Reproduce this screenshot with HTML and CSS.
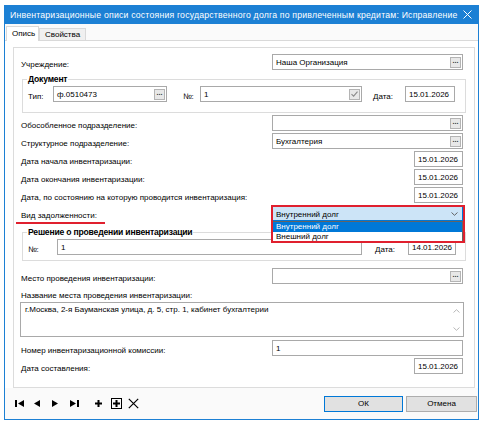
FILE: index.html
```html
<!DOCTYPE html>
<html lang="ru">
<head>
    <meta charset="UTF-8">
    <title>Инвентаризационные описи</title>
    <link rel="stylesheet" href="styles.css">
</head>
<body>
    <div class="window">
        <div class="titlebar">
            <span class="title">Инвентаризационные описи состояния государственного долга по привлеченным кредитам: Исправление</span>
            <svg class="close" width="9" height="9" viewBox="0 0 9 9"><path d="M0.5 0.5L8.5 8.5M8.5 0.5L0.5 8.5" stroke="#fff" stroke-width="1"/></svg>
        </div>

        <div class="tabs">
            <div class="tab active">Опись</div>
            <div class="tab">Свойства</div>
        </div>

        <div class="page">
            <div class="panel">
                <div class="row first">
                    <span class="lbl">Учреждение:</span>
                    <div class="field wide">Наша Организация<span class="dots">...</span></div>
                </div>

                <fieldset class="group doc">
                    <legend>Документ</legend>
                    <div class="grow">
                        <span class="glbl tip">Тип:</span>
                        <div class="field tipf">ф.0510473<span class="dots">...</span></div>
                        <span class="glbl num">№:</span>
                        <div class="field numf">1<span class="chk"><svg width="7" height="6" viewBox="0 0 7 6"><path d="M0.5 3.2L2.6 5.2L6.5 0.6" fill="none" stroke="#8a8a8a" stroke-width="1.1"/></svg></span></div>
                        <span class="glbl dt">Дата:</span>
                        <div class="field docdate">15.01.2026</div>
                    </div>
                </fieldset>

                <div class="row">
                    <span class="lbl">Обособленное подразделение:</span>
                    <div class="field wide"><span class="dots">...</span></div>
                </div>
                <div class="row">
                    <span class="lbl">Структурное подразделение:</span>
                    <div class="field wide">Бухгалтерия<span class="dots">...</span></div>
                </div>
                <div class="row">
                    <span class="lbl">Дата начала инвентаризации:</span>
                    <div class="field date">15.01.2026</div>
                </div>
                <div class="row">
                    <span class="lbl">Дата окончания инвентаризации:</span>
                    <div class="field date">15.01.2026</div>
                </div>
                <div class="row">
                    <span class="lbl">Дата, по состоянию на которую проводится инвентаризация:</span>
                    <div class="field date">15.01.2026</div>
                </div>
                <div class="row">
                    <span class="lbl"><span class="marked">Вид задолженности:</span></span>
                    <div class="combo">
                        <div class="combo-value">Внутренний долг
                            <svg class="chev" width="7" height="4" viewBox="0 0 7 4"><path d="M0.5 0.5L3.5 3.3L6.5 0.5" fill="none" stroke="#555" stroke-width="0.9"/></svg>
                        </div>
                        <div class="dropdown">
                            <div class="opt sel">Внутренний долг</div>
                            <div class="opt">Внешний долг</div>
                        </div>
                        <div class="mark"></div>
                    </div>
                </div>

                <fieldset class="group dec">
                    <legend>Решение о проведении инвентаризации</legend>
                    <div class="grow">
                        <span class="glbl num2">№:</span>
                        <div class="field decnum">1</div>
                        <span class="glbl dt2">Дата:</span>
                        <div class="field decdate">14.01.2026</div>
                    </div>
                </fieldset>

                <div class="row place">
                    <span class="lbl">Место проведения инвентаризации:</span>
                    <div class="field wide"><span class="dots">...</span></div>
                </div>

                <div class="caption">Название места проведения инвентаризации:</div>
                <div class="memo">
                    <span class="memo-text">г.Москва, 2-я Бауманская улица, д. 5, стр. 1, кабинет бухгалтерии</span>
                    <div class="memo-scroll">
                        <svg width="7" height="4" viewBox="0 0 7 4"><path d="M0.5 3.5L3.5 0.7L6.5 3.5" fill="none" stroke="#b0b0b0" stroke-width="0.9"/></svg>
                        <svg width="7" height="4" viewBox="0 0 7 4"><path d="M0.5 0.5L3.5 3.3L6.5 0.5" fill="none" stroke="#b0b0b0" stroke-width="0.9"/></svg>
                    </div>
                </div>

                <div class="row komis">
                    <span class="lbl">Номер инвентаризационной комиссии:</span>
                    <div class="field wide">1</div>
                </div>
                <div class="row">
                    <span class="lbl">Дата составления:</span>
                    <div class="field date">15.01.2026</div>
                </div>
            </div>
        </div>

        <div class="footer">
            <div class="nav">
                <svg class="ic i1" width="9" height="7" viewBox="0 0 9 7"><rect x="0" y="0" width="2" height="7"/><polygon points="9,0 9,7 3,3.5"/></svg>
                <svg class="ic i2" width="7" height="7" viewBox="0 0 7 7"><polygon points="7,0 7,7 1,3.5"/></svg>
                <svg class="ic i3" width="7" height="7" viewBox="0 0 7 7"><polygon points="0,0 0,7 6,3.5"/></svg>
                <svg class="ic i4" width="9" height="7" viewBox="0 0 9 7"><polygon points="0,0 0,7 6,3.5"/><rect x="7" y="0" width="2" height="7"/></svg>
                <svg class="ic i5" width="7" height="7" viewBox="0 0 7 7"><rect x="2.5" y="0" width="2" height="7"/><rect x="0" y="2.5" width="7" height="2"/></svg>
                <svg class="ic i6" width="11" height="11" viewBox="0 0 11 11"><rect x="0.5" y="0.5" width="10" height="10" fill="none" stroke="#000"/><rect x="4.5" y="2" width="2" height="7"/><rect x="2" y="4.5" width="7" height="2"/></svg>
                <svg class="ic i7" width="11" height="11" viewBox="0 0 11 11"><path d="M0.8 0.8L10.2 10.2M10.2 0.8L0.8 10.2" stroke="#000" stroke-width="1.2"/></svg>
            </div>
            <button class="btn ok">ОК</button>
            <button class="btn">Отмена</button>
        </div>
    </div>
</body>
</html>
```

FILE: styles.css
```css
html, body {
    margin: 0;
    padding: 0;
}

body {
    width: 487px;
    height: 430px;
    overflow: hidden;
    background-color: #ffffff;
    font-family: "Liberation Sans", Arial, sans-serif;
    font-size: 8px;
    color: #000000;
}

.window {
    margin: 5px 0 0 4px;
    width: 475px;
    height: 415px;
    box-sizing: border-box;
    border: 1px solid #1c80d4;
    border-top: none;
    background-color: #fafafa;
    display: flex;
    flex-direction: column;
}

.titlebar {
    height: 19px;
    flex: none;
    background-color: #1c80d4;
    color: #ffffff;
    display: flex;
    align-items: center;
    padding: 0 4px 0 5px;
    font-size: 8.7px;
    letter-spacing: 0.2px;
}

    .titlebar .title {
        flex: 1;
        min-width: 0;
        white-space: nowrap;
    }

    .titlebar .close {
        flex: none;
        margin-right: 2px;
    }

.tabs {
    height: 16px;
    flex: none;
    display: flex;
    align-items: flex-end;
    padding-left: 1px;
}

.tab {
    height: 12px;
    line-height: 11px;
    box-sizing: border-box;
    padding: 0 5px;
    border: 1px solid #d9d9d9;
    border-bottom: none;
    background-color: #f0f0f0;
}

    .tab.active {
        height: 15px;
        line-height: 13px;
        background-color: #ffffff;
        margin-bottom: -1px;
        position: relative;
        padding: 0 5px;
        width: 33px;
        text-align: center;
    }

.page {
    height: 348px;
    flex: none;
    box-sizing: border-box;
    border-top: 1px solid #d9d9d9;
    padding: 6px 3px 0 8px;
    background-color: #ffffff;
}

.panel {
    height: 341px;
    box-sizing: border-box;
    border: 1px solid #dcdcdc;
    background-color: #ffffff;
    padding: 0 11px 0 7px;
}

.row {
    display: flex;
    align-items: flex-end;
    height: 16px;
    margin-top: 2px;
}

    .row.first {
        margin-top: 6px;
    }

    .row.place {
        margin-top: 7px;
    }

    .row.komis {
        margin-top: 3px;
    }

.lbl {
    flex: 1;
    line-height: 10px;
    white-space: nowrap;
}

.marked {
    position: relative;
}

    .marked::after {
        content: '';
        position: absolute;
        left: -5px;
        bottom: -4px;
        width: 89px;
        height: 2px;
        background-color: #e0202e;
    }

.field {
    height: 16px;
    box-sizing: border-box;
    border: 1px solid #a9a9a9;
    background-color: #ffffff;
    display: flex;
    align-items: center;
    padding-left: 3px;
    white-space: nowrap;
}

.wide {
    width: 191px;
}

.date {
    width: 49px;
}

.dots,
.chk {
    margin-left: auto;
    margin-right: 1px;
    width: 11px;
    height: 11px;
    box-sizing: border-box;
    border: 1px solid #b4b4b4;
    background-color: #e8e8e8;
    font-size: 7px;
    font-weight: bold;
    line-height: 6px;
    text-align: center;
    color: #333;
}

.chk {
    display: flex;
    align-items: center;
    justify-content: center;
}

.group {
    border: 1px solid #dcdcdc;
    margin: 0;
    padding: 0 0 0 5px;
}

    .group legend {
        font-weight: bold;
        font-size: 8.6px;
        letter-spacing: -0.2px;
        line-height: 12px;
        padding: 0 1px;
        margin-left: -1px;
    }

.doc {
    margin: 3px -3px 0 1px;
    padding-top: 1px;
    padding-bottom: 10px;
}

.dec {
    margin: 5px -3px 0 1px;
    padding-top: 1px;
    padding-bottom: 5px;
}

.grow {
    display: flex;
    align-items: flex-end;
    height: 16px;
}

.glbl {
    line-height: 10px;
    white-space: nowrap;
}

.tip {
    width: 25px;
}

.tipf {
    width: 114px;
}

.num {
    margin-left: 16px;
    width: 17px;
}

.numf {
    width: 162px;
}

.dt {
    margin-left: 11px;
    width: 32px;
}

.docdate {
    width: 50px;
}

.num2 {
    width: 29px;
}

.decnum {
    width: 305px;
}

.dt2 {
    margin-left: 13px;
    width: 33px;
}

.decdate {
    width: 48px;
}

.combo {
    position: relative;
    width: 191px;
    height: 16px;
}

.combo-value {
    height: 16px;
    box-sizing: border-box;
    border: 1px solid #0078d7;
    background-color: #cce4f7;
    display: flex;
    align-items: center;
    padding: 2px 0 0 3px;
}

    .combo-value .chev {
        margin-left: auto;
        margin-right: 4px;
    }

.dropdown {
    position: absolute;
    top: 16px;
    left: 0;
    width: 100%;
    box-sizing: border-box;
    border: 1px solid #646464;
    background-color: #ffffff;
    z-index: 2;
}

.opt {
    height: 10px;
    line-height: 10px;
    padding-left: 3px;
}

    .opt.sel {
        background-color: #0078d7;
        color: #ffffff;
    }

.mark {
    position: absolute;
    top: 0;
    left: -1px;
    width: 194px;
    height: 38px;
    box-sizing: border-box;
    border: 2px solid #e0202e;
    z-index: 3;
}

.caption {
    margin-top: 6px;
    line-height: 11px;
}

.memo {
    margin: 1px 0 0 -1px;
    width: 444px;
    height: 35px;
    box-sizing: border-box;
    border: 1px solid #a9a9a9;
    display: flex;
    padding: 2px 0 0 4px;
}

.memo-text {
    flex: 1;
    line-height: 10px;
}

.memo-scroll {
    width: 14px;
    display: flex;
    flex-direction: column;
    justify-content: space-between;
    align-items: center;
    padding: 4px 0 5px;
    box-sizing: border-box;
}

.footer {
    flex: 1;
    display: flex;
    align-items: center;
    padding: 0 1px 0 10px;
}

.nav {
    flex: 1;
    display: flex;
    align-items: center;
}

.ic {
    fill: #000;
}

.i1 { margin-right: 9px; }
.i2 { margin-right: 12px; }
.i3 { margin-right: 11px; }
.i4 { margin-right: 16px; }
.i5 { margin-right: 9px; }
.i6 { margin-right: 6px; }

.btn {
    height: 16px;
    width: 71px;
    box-sizing: border-box;
    border: 1px solid #adadad;
    background-color: #e1e1e1;
    font-family: "Liberation Sans", Arial, sans-serif;
    font-size: 8px;
    padding: 0;
    margin-left: 3px;
}

    .btn.ok {
        width: 79px;
        border-color: #0078d7;
    }
```
